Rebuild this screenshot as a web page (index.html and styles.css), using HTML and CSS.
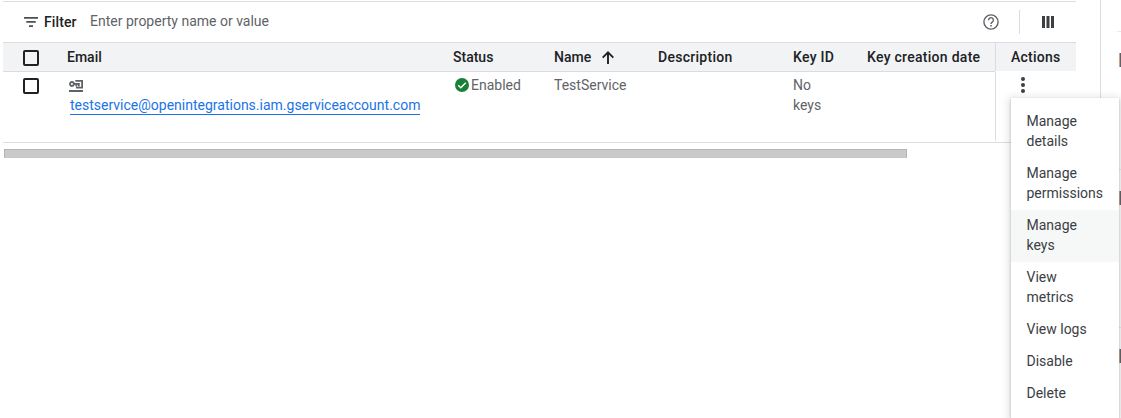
FILE: index.html
```html
<!DOCTYPE html>
<html lang="en">
<head>
<meta charset="utf-8">
<title>Service accounts</title>
<link rel="stylesheet" href="styles.css">
</head>
<body>
<div class="page">
  <main class="panel">
    <div class="toolbar">
      <svg class="filter-icon" width="14" height="10" viewBox="0 0 14 10"><path d="M0 0h14v1.7H0zM2.3 4h9.4v1.8H2.3zM5 8.2h4V10H5z" fill="#4b4f54"/></svg>
      <span class="filter-label">Filter</span>
      <span class="placeholder">Enter property name or value</span>
      <svg class="help" width="16" height="16" viewBox="0 0 16 16" fill="none" stroke="#5f6368" stroke-width="1.4"><circle cx="8" cy="8" r="7.1"/><path d="M5.6 6.2a2.4 2.4 0 1 1 3.8 1.8C8.5 8.7 8 9 8 10"/><path d="M8 11v1.6" stroke-width="1.6"/></svg>
      <span class="rule"></span>
      <svg class="columns" width="12" height="12" viewBox="0 0 12 12"><path d="M0 0h3v12H0zM4.5 0h3v12h-3zM9 0h3v12H9z" fill="#3c4043"/></svg>
    </div>
    <div class="row head">
      <div class="cell check"><span class="box"></span></div>
      <div class="cell">Email</div>
      <div class="cell">Status</div>
      <div class="cell sorted"><span>Name</span><svg width="12" height="13" viewBox="0 0 12 13" fill="none" stroke="#202124" stroke-width="1.9"><path d="M6 13V1.4M.7 6.7 6 1.4l5.3 5.3"/></svg></div>
      <div class="cell wide">Description</div>
      <div class="cell wide">Key ID</div>
      <div class="cell wide">Key creation date</div>
      <div class="cell actions">Actions</div>
    </div>
    <div class="row data">
      <div class="cell check"><span class="box"></span></div>
      <div class="cell email">
        <svg width="14" height="13" viewBox="0 0 14 13" fill="none" stroke="#5f6368"><circle cx="2.9" cy="5" r="2" stroke-width="1.8"/><path d="M5 4.8h5.8M7.3 5v2.4M9.8 5v2.4" stroke-width="1.8"/><path d="M6.3 1.9h6.8v6.7H7" stroke-width="1.8"/><path d="M0 12h14" stroke-width="2"/></svg>
        <a class="link">testservice@openintegrations.iam.gserviceaccount.com</a>
      </div>
      <div class="cell status"><svg width="14" height="14" viewBox="0 0 14 14"><circle cx="7" cy="7" r="7" fill="#188038"/><path d="m3.2 7.2 2.6 2.6 5-5" fill="none" stroke="#fff" stroke-width="1.5"/></svg><span>Enabled</span></div>
      <div class="cell">TestService</div>
      <div class="cell"></div>
      <div class="cell keyid">No keys</div>
      <div class="cell"></div>
      <div class="cell actions"><svg class="more" width="4" height="16" viewBox="0 0 4 16" fill="#3c4043"><circle cx="2" cy="2" r="2"/><circle cx="2" cy="8" r="2"/><circle cx="2" cy="14" r="2"/></svg></div>
    </div>
    <div class="scrollbar"></div>
  </main>
  <aside class="side">
    <div class="side-item first"><span class="mark"></span></div>
    <div class="side-item"><span class="mark"></span></div>
    <div class="side-item"><span class="mark"></span></div>
  </aside>
</div>
<div class="menu">
  <div class="item">Manage details</div>
  <div class="item">Manage permissions</div>
  <div class="item active">Manage keys</div>
  <div class="item">View metrics</div>
  <div class="item">View logs</div>
  <div class="item">Disable</div>
  <div class="item">Delete</div>
</div>
</body>
</html>
```
FILE: styles.css
```css
* { box-sizing: border-box; }
html { overflow: hidden; height: 418px; }
body {
  margin: 0;
  width: 1121px;
  height: 418px;
  overflow: hidden;
  position: relative;
  background: #fff;
  font: 14px/20px Roboto, sans-serif;
  color: #5f6368;
}
svg { display: block; flex: none; }
.page { display: flex; height: 418px; overflow: hidden; }
.panel { width: 1073px; margin: 1px 24px 0 3px; flex: none; }
.toolbar {
  display: flex;
  align-items: center;
  height: 42px;
  border-top: 1px solid #dadce0;
  border-bottom: 1px solid #dadce0;
  padding: 0 22px 0 21px;
}
.filter-label {
  margin-left: 6px;
  width: 46px;
  font-weight: 500;
  letter-spacing: 0.1px;
  color: #202124;
}
.placeholder { flex: 1; margin-top: -2px; }
.rule { width: 1px; height: 24px; background: #dadce0; margin: 0 22px 0 20px; }
.row {
  display: grid;
  grid-template-columns: 64px 386px 101px 104px 135px 74px 128px 81px;
}
.head {
  height: 28px;
  background: #f1f3f4;
  color: #202124;
  font-weight: 500;
}
.head .cell { padding-top: 4px; border-bottom: 1px solid #dadce0; height: 29px; }
.head .wide { letter-spacing: 0.28px; }
.head .actions { padding-left: 15px; border-bottom: 0; height: 28px; letter-spacing: 0.25px; }
.actions { border-left: 1px solid #dadce0; }
.sorted { display: flex; gap: 11px; }
.sorted svg { margin-top: 4px; }
.head .check { padding: 7px 0 0 20px; }
.box {
  display: block;
  width: 16px;
  height: 16px;
  border: 2px solid #202124;
  border-radius: 2px;
}
.data { height: 72px; padding-top: 1px; border-bottom: 1px solid #dadce0; }
.data .cell { padding-top: 3px; }
.data .check { padding: 6px 0 0 20px; }
.data .email { padding: 7px 0 0 2px; }
.link {
  display: inline-block;
  height: 20px;
  margin: 3px 0 0 1px;
  color: #1a73e8;
  border-bottom: 1px solid #1a73e8;
}
.data .status { display: flex; gap: 2px; padding-left: 2px; }
.status svg { margin-top: 3px; }
.keyid { padding-right: 30px; }
.data .actions { padding: 5px 0 0 25px; height: 69px; }
.scrollbar {
  width: 903px;
  height: 9px;
  margin: 6px 0 0 1px;
  background: #cacaca;
  border: 1px solid #b4b4b4;
  border-bottom-color: #c6c6c6;
}
.side { flex: 1; border-left: 1px solid #dadce0; padding-left: 16px; }
.side-item { height: 158px; border-top: 1px solid #e8eaed; padding: 21px 0 0 2px; }
.side-item.first { height: 138px; margin-top: 31px; }
.mark { display: block; height: 14px; background: #5f6368; border-left: 1px solid #d0a080; }
.menu {
  position: absolute;
  left: 1011px;
  top: 98px;
  width: 108px;
  height: 320px;
  padding-top: 8px;
  background: #fff;
  color: #3c4043;
  box-shadow: 0 1px 2px rgba(60,64,67,.3), 0 2px 8px 2px rgba(60,64,67,.18);
}
.item { padding: 5px 15px 7px 15.5px; }
.item.active { background: #f6f8f8; }
```
